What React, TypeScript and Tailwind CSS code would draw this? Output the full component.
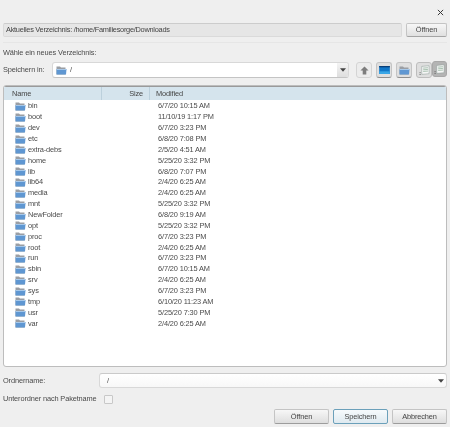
import React from "react";

const rows: [string, string][] = [
  ["bin", "6/7/20 10:15 AM"],
  ["boot", "11/10/19 1:17 PM"],
  ["dev", "6/7/20 3:23 PM"],
  ["etc", "6/8/20 7:08 PM"],
  ["extra-debs", "2/5/20 4:51 AM"],
  ["home", "5/25/20 3:32 PM"],
  ["lib", "6/8/20 7:07 PM"],
  ["lib64", "2/4/20 6:25 AM"],
  ["media", "2/4/20 6:25 AM"],
  ["mnt", "5/25/20 3:32 PM"],
  ["NewFolder", "6/8/20 9:19 AM"],
  ["opt", "5/25/20 3:32 PM"],
  ["proc", "6/7/20 3:23 PM"],
  ["root", "2/4/20 6:25 AM"],
  ["run", "6/7/20 3:23 PM"],
  ["sbin", "6/7/20 10:15 AM"],
  ["srv", "2/4/20 6:25 AM"],
  ["sys", "6/7/20 3:23 PM"],
  ["tmp", "6/10/20 11:23 AM"],
  ["usr", "5/25/20 7:30 PM"],
  ["var", "2/4/20 6:25 AM"],
];

function Folder({ className = "w-[11px] h-[9px]" }: { className?: string }) {
  return (
    <svg viewBox="0 0 11 9" className={`${className} shrink-0`}>
      <path d="M0.5 0.5 H4 L5 1.5 H9.5 V8.5 H0.5 Z" fill="#9a9ea4" />
      <path d="M0.5 3 H10.5 L10 8.5 H0.5 Z" fill="#5f97d2" />
      <path d="M0.5 3 H10.5 V4 H0.5 Z" fill="#a6c8ea" />
    </svg>
  );
}

function Arrow() {
  return (
    <svg viewBox="0 0 7 4" className="w-[6px] h-[4px]">
      <path d="M0 0 H7 L3.5 4 Z" fill="#444" />
    </svg>
  );
}

function Btn({ children, focus, w = "w-[55px]" }: { children: React.ReactNode; focus?: boolean; w?: string }) {
  return (
    <div
      className={`${w} h-[15px] rounded-[2px] border flex items-center justify-center text-[#444] ${
        focus
          ? "border-[#6ba0ba] bg-gradient-to-b from-[#f6fafc] to-[#dfeaf0]"
          : "border-[#c4c4c4] border-b-[#9c9c9c] bg-gradient-to-b from-[#f7f7f7] to-[#dedede]"
      }`}
    >
      {children}
    </div>
  );
}

function ToolBtn({ children, size = "w-[16px]", cls = "border-[#d4d4d4] bg-[#ececec]" }: { children: React.ReactNode; size?: string; cls?: string }) {
  return (
    <div className={`${size} h-[16px] rounded-[3px] border flex items-center justify-center ${cls}`}>{children}</div>
  );
}

function ListIcon() {
  return (
    <svg viewBox="0 0 12 12" className="w-[11px] h-[11px]">
      <path d="M3 1.5L11 0.8V9.5L3 10.2Z" fill="#f6f6f6" stroke="#8fa09a" strokeWidth="0.6" />
      <path d="M4.5 3.4L9.8 3M4.5 5.2L9.8 4.8M4.5 7L9.8 6.6" stroke="#7fa58c" strokeWidth="0.7" />
      <path d="M0.6 8.4H1.8M0.6 10.4H1.8" stroke="#555" strokeWidth="0.9" />
    </svg>
  );
}

export default function App() {
  return (
    <div
      className="w-[450px] h-[427px] bg-[#efefef] flex flex-col px-[3px] text-[7.4px] tracking-[-0.13px] leading-[10px] text-[#4a4a4a] overflow-hidden blur-[0.25px]"
      style={{ fontFamily: '"Liberation Sans", sans-serif' }}
    >
      <div className="h-[23px] flex items-center justify-end pr-[3px] pt-[2px] shrink-0">
        <svg viewBox="0 0 8 8" className="w-[7px] h-[7px]">
          <path d="M1 1L7 7M7 1L1 7" stroke="#333" strokeWidth="1.1" />
        </svg>
      </div>

      <div className="flex gap-[4px] h-[14px] shrink-0">
        <div className="flex-1 bg-[#e6e6e6] border border-[#dadada] border-t-[#cccccc] rounded-[2px] flex items-center pl-[2px] text-[#444] tracking-[-0.27px]">
          Aktuelles Verzeichnis: /home/Familiesorge/Downloads
        </div>
        <div className="w-[41px] rounded-[2px] border border-[#c4c4c4] border-b-[#a4a4a4] bg-gradient-to-b from-[#f7f7f7] to-[#e0e0e0] flex items-center justify-center text-[#444]">
          Öffnen
        </div>
      </div>

      <div className="h-px bg-[#e6e6e6] mt-[5px] shrink-0" />

      <div className="mt-[5px] h-[10px] shrink-0">Wähle ein neues Verzeichnis:</div>

      <div className="mt-[4px] h-[16px] flex items-center shrink-0">
        <div className="w-[49px]">Speichern in:</div>
        <div className="w-[297px] h-[16px] border border-[#d8d8d8] border-b-[#c4c4c4] rounded-[3px] bg-white flex items-center">
          <div className="flex-1 flex items-center gap-[3px] pl-[3px] text-[#444]">
            <Folder />
            <span>/</span>
          </div>
          <div className="w-[11px] h-full bg-gradient-to-b from-[#f4f4f4] to-[#dedede] flex items-center justify-center rounded-r-[2px]">
            <Arrow />
          </div>
        </div>
        <div className="ml-[7px] flex gap-[4px]">
          <ToolBtn>
            <svg viewBox="0 0 10 10" className="w-[9px] h-[9px]">
              <path d="M5 0.5L9.5 5H7V9.5H3V5H0.5Z" fill="#7d7d7d" />
            </svg>
          </ToolBtn>
          <ToolBtn cls="border-[#c4c4c4] border-b-[#8f8f8f] bg-[#dfdfdf]">
            <svg viewBox="0 0 12 9" className="w-[11px] h-[8px]">
              <rect width="12" height="9" fill="#1177c8" />
              <rect width="12" height="1.5" fill="#0a3f78" />
              <rect y="6" width="12" height="3" fill="#39a6e6" />
            </svg>
          </ToolBtn>
          <ToolBtn cls="border-[#c4c4c4] border-b-[#8f8f8f] bg-[#dfdfdf]">
            <Folder />
          </ToolBtn>
        </div>
        <div className="ml-[4px] flex">
          <ToolBtn size="w-[16px]" cls="border-[#bdbdbd] bg-[#dedede]">
            <ListIcon />
          </ToolBtn>
          <ToolBtn size="w-[15px]" cls="border-[#a8a8a8] bg-[#b4b4b4] -mt-[1px]">
            <ListIcon />
          </ToolBtn>
        </div>
      </div>

      <div className="mt-[7px] h-[282px] border border-[#bdbdbd] rounded-[3px] bg-white flex flex-col shrink-0 overflow-hidden">
        <div className="h-[14px] bg-[#d5e4ed] border-t border-[#9a9a9a] flex items-center text-[#444] shrink-0">
          <div className="w-[98px] pl-[8px] border-r border-[#bcd0dc] h-full flex items-center">Name</div>
          <div className="w-[48px] pr-[6px] border-r border-[#bcd0dc] h-full flex items-center justify-end">Size</div>
          <div className="pl-[6px]">Modified</div>
        </div>
        <div className="flex flex-col pt-[1px]">
          {rows.map(([name, date]) => (
            <div key={name} className="h-[10.87px] flex items-center">
              <div className="w-[147px] pl-[11px] flex items-center gap-[2px]">
                <Folder />
                <span>{name}</span>
              </div>
              <div className="ml-[7px]">{date}</div>
            </div>
          ))}
        </div>
      </div>

      <div className="mt-[6px] h-[15px] flex items-center shrink-0">
        <div className="w-[96px]">Ordnername:</div>
        <div className="flex-1 h-[15px] border border-[#d8d8d8] border-t-[#cacaca] rounded-[3px] bg-gradient-to-b from-white to-[#f8f8f8] flex items-center justify-between pl-[7px] pr-[2px]">
          <span>/</span>
          <Arrow />
        </div>
      </div>

      <div className="mt-[5px] h-[12px] flex items-center gap-[7px] shrink-0">
        <span>Unterordner nach Paketname</span>
        <div className="w-[9px] h-[9px] border border-[#c8c8c8] rounded-[1px] bg-[#f4f4f4]" />
      </div>

      <div className="mt-[4px] flex justify-end gap-[4px] shrink-0">
        <Btn>Öffnen</Btn>
        <Btn focus>Speichern</Btn>
        <Btn>Abbrechen</Btn>
      </div>
    </div>
  );
}
